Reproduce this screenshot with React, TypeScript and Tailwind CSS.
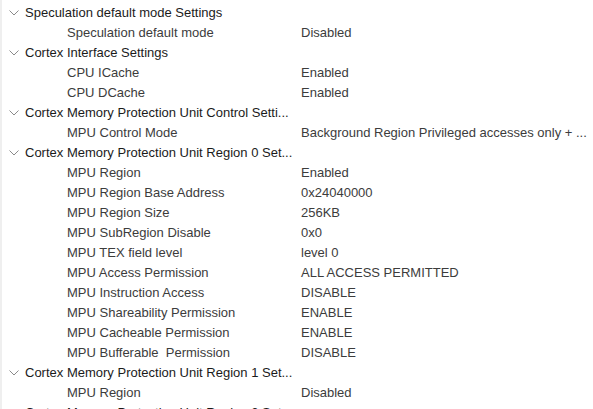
import React from "react";

type Row =
  | { kind: "group"; label: string }
  | { kind: "item"; label: string; value: string };

const rows: Row[] = [
  { kind: "group", label: "Speculation default mode Settings" },
  { kind: "item", label: "Speculation default mode", value: "Disabled" },
  { kind: "group", label: "Cortex Interface Settings" },
  { kind: "item", label: "CPU ICache", value: "Enabled" },
  { kind: "item", label: "CPU DCache", value: "Enabled" },
  { kind: "group", label: "Cortex Memory Protection Unit Control Setti..." },
  { kind: "item", label: "MPU Control Mode", value: "Background Region Privileged accesses only + ..." },
  { kind: "group", label: "Cortex Memory Protection Unit Region 0 Set..." },
  { kind: "item", label: "MPU Region", value: "Enabled" },
  { kind: "item", label: "MPU Region Base Address", value: "0x24040000" },
  { kind: "item", label: "MPU Region Size", value: "256KB" },
  { kind: "item", label: "MPU SubRegion Disable", value: "0x0" },
  { kind: "item", label: "MPU TEX field level", value: "level 0" },
  { kind: "item", label: "MPU Access Permission", value: "ALL ACCESS PERMITTED" },
  { kind: "item", label: "MPU Instruction Access", value: "DISABLE" },
  { kind: "item", label: "MPU Shareability Permission", value: "ENABLE" },
  { kind: "item", label: "MPU Cacheable Permission", value: "ENABLE" },
  { kind: "item", label: "MPU Bufferable  Permission", value: "DISABLE" },
  { kind: "group", label: "Cortex Memory Protection Unit Region 1 Set..." },
  { kind: "item", label: "MPU Region", value: "Disabled" },
  { kind: "group", label: "Cortex Memory Protection Unit Region 2 Set..." },
];

const Chevron = () => (
  <svg width="10" height="6" viewBox="0 0 10 6" className="shrink-0">
    <path d="M0.5 0.5 L5 5 L9.5 0.5" fill="none" stroke="#8a8a8a" strokeWidth="1" />
  </svg>
);

export default function App() {
  return (
    <div className="flex h-[409px] w-[593px] overflow-hidden bg-white font-['Liberation_Sans',Arial,sans-serif] text-[13px]">
      <div className="w-[2px] shrink-0 bg-[#efefef]" />
      <div className="flex flex-1 flex-col pt-[3px]">
        {rows.map((r, i) =>
          r.kind === "group" ? (
            <div key={i} className="flex h-5 shrink-0 items-center">
              <div className="flex w-[23px] shrink-0 justify-center pl-[1px]">
                <Chevron />
              </div>
              <span className="whitespace-pre text-[#1b1b1b]">{r.label}</span>
            </div>
          ) : (
            <div key={i} className="flex h-5 shrink-0 items-center text-[#3c3c3c]">
              <span className="w-[299px] shrink-0 whitespace-pre pl-[65px]">{r.label}</span>
              <span className="whitespace-pre">{r.value}</span>
            </div>
          )
        )}
      </div>
    </div>
  );
}
